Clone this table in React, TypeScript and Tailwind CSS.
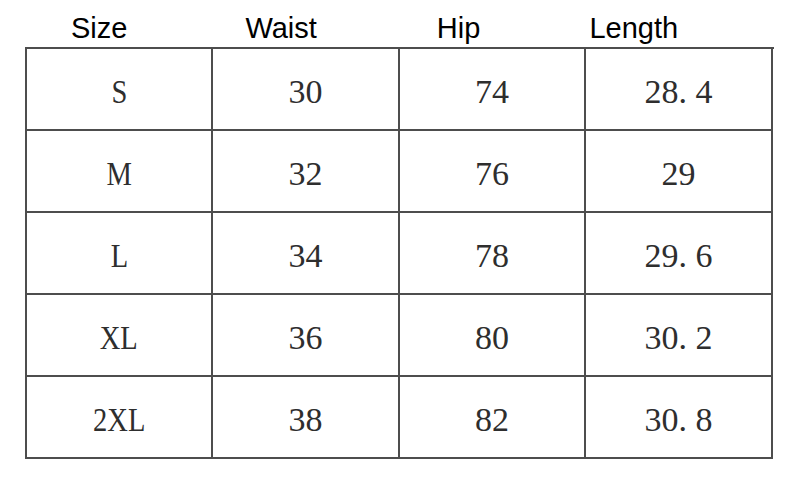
export default function App() {
  const rows = [
    ["S", "30", "74", "28. 4"],
    ["M", "32", "76", "29"],
    ["L", "34", "78", "29. 6"],
    ["XL", "36", "80", "30. 2"],
    ["2XL", "38", "82", "30. 8"],
  ];
  return (
    <div className="w-[806px] h-[484px] bg-white overflow-hidden">
      <div
        className="h-[47px] flex pt-[14px] text-[29px] leading-[29px] text-black"
        style={{ fontFamily: '"Liberation Sans", Arial, sans-serif' }}
      >
        <span className="ml-[71px]">Size</span>
        <span className="ml-[118px]">Waist</span>
        <span className="ml-[120px]">Hip</span>
        <span className="ml-[109px]">Length</span>
      </div>
      <div
        className="ml-[25px] w-[749px] grid grid-cols-[186px_187px_186px_187px] border-l-2 border-t-2 border-[#4d4d4d]"
        style={{ fontFamily: '"Liberation Serif", "Times New Roman", serif' }}
      >
        {rows.map((r, i) =>
          r.map((c, j) => (
            <div
              key={i + "-" + j}
              className="h-[82px] border-r-2 border-b-2 border-[#4d4d4d] flex items-center justify-center text-[34px] text-[#2e2e2e] pt-[4px]"
            >
              <span className={j === 0 ? "inline-block scale-x-[0.84]" : ""}>{c}</span>
            </div>
          ))
        )}
      </div>
    </div>
  );
}
